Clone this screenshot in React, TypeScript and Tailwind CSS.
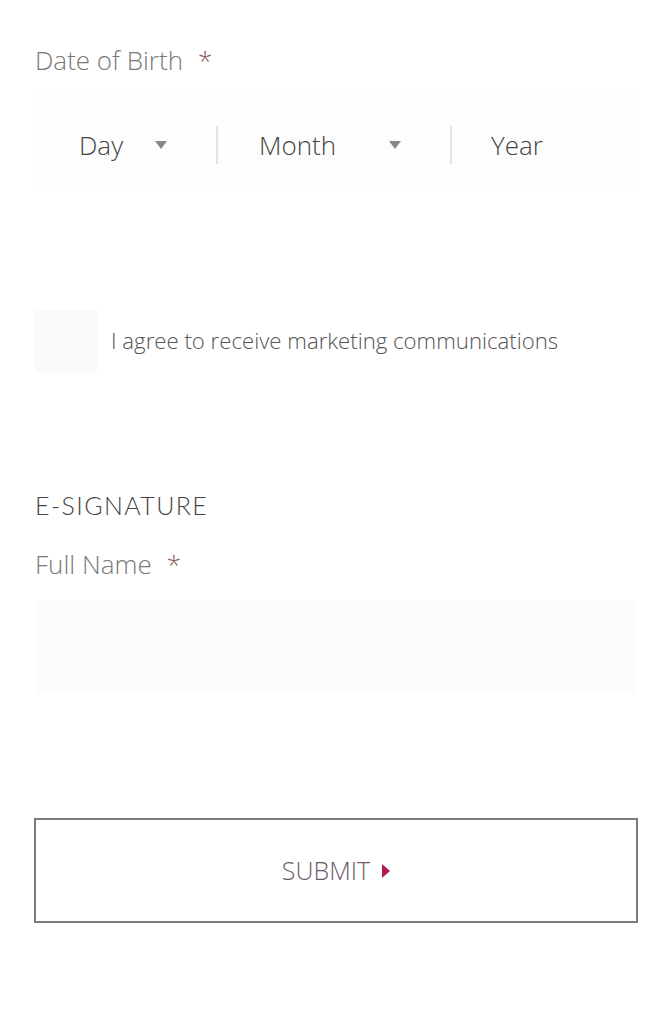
import React from "react";

export default function App() {
  return (
    <div className="w-[672px] h-[1024px] bg-white font-['Open_Sans',sans-serif] font-light overflow-hidden">
      <div className="pl-[35px] pr-[35px] pt-[40px]">
        <div className="flex items-center h-[40px] text-[26px] text-[#7a7a7a]">
          <span>Date of Birth</span>
          <span className="ml-[15px] text-[#8a5a5a]">*</span>
        </div>
        <div className="mt-[15px] w-[602px] h-[95px] bg-[#fdfdfd] shadow-[0_0_2px_rgba(0,0,0,0.03)] flex items-center text-[26px] text-[#444] pt-[5px]">
          <div className="flex items-center w-[181px] pl-[44px]">
            <span>Day</span>
            <svg className="ml-[32px]" width="12" height="8" viewBox="0 0 12 8"><path d="M0 0h12L6 8z" fill="#888" /></svg>
          </div>
          <div className="w-[2px] h-[38px] bg-[#e3e3e3]" />
          <div className="flex items-center w-[232px] pl-[41px]">
            <span>Month</span>
            <svg className="ml-[53px]" width="12" height="8" viewBox="0 0 12 8"><path d="M0 0h12L6 8z" fill="#888" /></svg>
          </div>
          <div className="w-[2px] h-[38px] bg-[#e3e3e3]" />
          <div className="pl-[39px]">Year</div>
        </div>

        <div className="mt-[120px] flex items-center">
          <div className="w-[62px] h-[62px] bg-[#fafafa]" />
          <span className="ml-[14px] text-[22.2px] text-[#555]">I agree to receive marketing communications</span>
        </div>

        <div className="mt-[118px] text-[25px] text-[#444] font-['Lato',sans-serif] font-light tracking-[1.4px] leading-[30px]">E-SIGNATURE</div>
        <div className="mt-[29px] flex items-center h-[30px] text-[26px] text-[#7a7a7a]">
          <span>Full Name</span>
          <span className="ml-[15px] text-[#8a5a5a]">*</span>
        </div>
        <div className="mt-[21px] w-[602px] h-[93px] bg-[#fcfcfc]" />

        <button className="mt-[125px] w-[604px] h-[105px] -ml-[1px] border-2 border-[#7d7a7d] bg-white flex items-center justify-center text-[25px] text-[#6e5a6e]">
          <span>SUBMIT</span>
          <svg className="ml-[12px]" width="8" height="14" viewBox="0 0 8 14"><path d="M0 0L8 7L0 14z" fill="#b0185a" /></svg>
        </button>
      </div>
    </div>
  );
}
